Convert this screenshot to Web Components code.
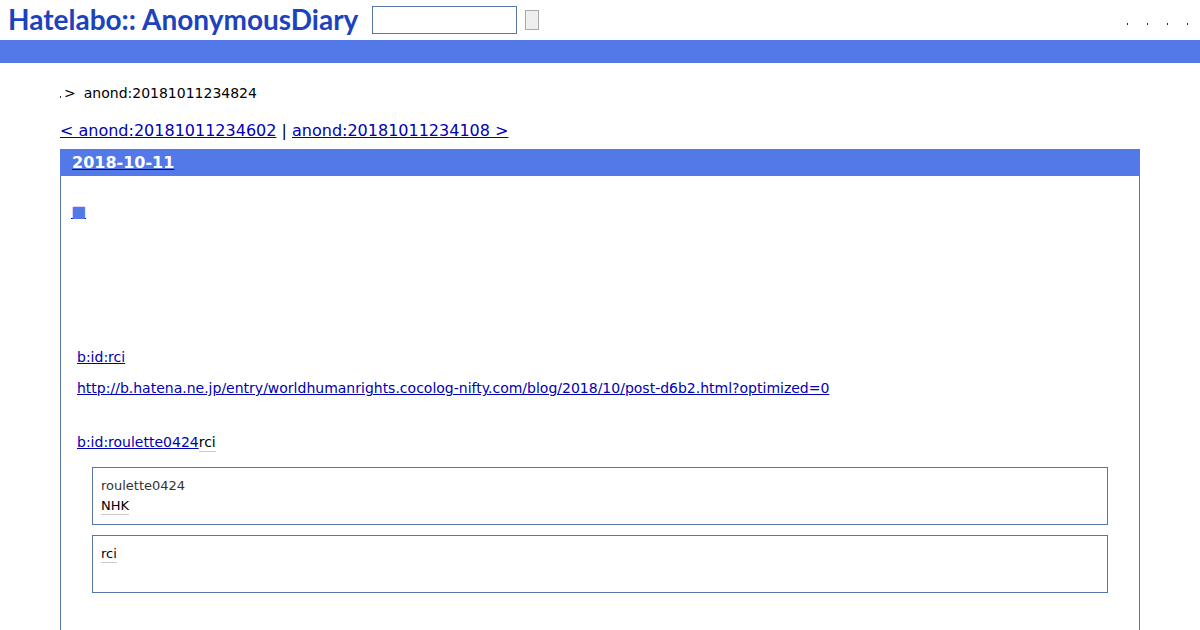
<!DOCTYPE html>
<html lang="ja">
<head>
<meta charset="utf-8">
<title>anond:20181011234824</title>
<style>
html, body { margin: 0; }
body { background: #fff; color: #000; font: 14px/20px "DejaVu Sans", "Noto Sans CJK JP", sans-serif; }
</style>
</head>
<body>
<diary-page>
  <site-header slot="header"></site-header>
  <bread-crumb>anond:20181011234824</bread-crumb>
  <diary-pager prev="anond:20181011234602" next="anond:20181011234108"></diary-pager>
  <diary-day date="2018-10-11">
    <diary-entry>
      <entry-line class="first"><text-link>b:id:rci</text-link></entry-line>
      <entry-line><text-link>http://b.hatena.ne.jp/entry/worldhumanrights.cocolog-nifty.com/blog/2018/10/post-d6b2.html?optimized=0</text-link></entry-line>
      <entry-line class="spaced"><text-link>b:id:roulette0424</text-link><key-word>rci</key-word></entry-line>
      <quote-box><div>roulette0424</div><key-word>NHK</key-word></quote-box>
      <quote-box><key-word>rci</key-word></quote-box>
    </diary-entry>
  </diary-day>
</diary-page>
<script>
function define(name, render) {
  customElements.define(name, class extends HTMLElement {
    constructor() {
      super();
      this.attachShadow({ mode: "open" }).innerHTML = render(this).trim();
    }
  });
}

define("diary-page", () => `
  <style>
    :host { display: flex; flex-direction: column; min-height: 100vh; }
    main { flex: 1; display: flex; flex-direction: column; padding: 20px 60px 0; }
  </style>
  <slot name="header"></slot>
  <main><slot></slot></main>`);

define("site-header", () => `
  <style>
    :host { display: block; border-bottom: 23px solid #5279e7; }
    header { display: flex; align-items: center; height: 40px; padding: 0 12px 0 8px; }
    .logo { display: flex; gap: 6px; width: 364px; padding-bottom: 2px; font: 700 28px/32px Lato, sans-serif; color: #1c43bd; text-decoration: none; }
    form { display: flex; align-items: center; gap: 8px; }
    input { box-sizing: border-box; width: 145px; height: 28px; margin: 0; padding: 2px 4px; border: 1px solid #5577aa; background: #fff; font: inherit; }
    button { box-sizing: border-box; width: 14px; height: 20px; padding: 0; border: 1px solid #a9a9a9; background: #efefef; }
    nav { display: flex; gap: 19px; margin: 8px 0 0 auto; }
    nav a { width: 1px; height: 2px; background: #333; }
  </style>
  <header>
    <a class="logo" href="#"><span>Hatelabo::</span><span>AnonymousDiary</span></a>
    <form><input type="text" aria-label="Search"><button type="button" aria-label="Submit search"></button></form>
    <nav aria-label="Account"><a href="#" aria-label="User"></a><a href="#" aria-label="Diary"></a><a href="#" aria-label="Login"></a><a href="#" aria-label="Help"></a></nav>
  </header>`);

define("bread-crumb", () => `
  <style>
    :host { display: flex; align-items: center; }
    a { width: 1px; height: 2px; margin: 8px 3px 0 0; background: #333; }
    .sep { margin-right: 8px; }
  </style>
  <a href="#" aria-label="Home"></a><span class="sep">&gt;</span><span><slot></slot></span>`);

define("diary-pager", el => `
  <style>
    :host { display: block; margin: 18px 0 8px; font-size: 16px; }
    a { color: #0000b4; }
  </style>
  <a href="#">&lt; ${el.getAttribute("prev")}</a> | <a href="#">${el.getAttribute("next")} &gt;</a>`);

define("diary-day", el => `
  <style>
    :host { flex: 1; display: block; border: 1px solid #5577aa; border-width: 0 1px; }
    h2 { margin: 0 -1px; padding: 4px 12px 3px; background: #5279e7; font-size: 16px; line-height: 20px; }
    a { color: #fff; text-decoration-color: #0000b4; }
  </style>
  <h2><a href="#">${el.getAttribute("date")}</a></h2>
  <slot></slot>`);

define("diary-entry", () => `
  <style>
    :host { display: block; padding: 26px 31px 37px 16px; }
    h3 { margin: 0 0 0 -6px; font-size: 16px; line-height: 20px; }
    a { color: #5279e7; text-decoration-color: #0000b4; }
  </style>
  <h3><a href="#">■</a></h3>
  <slot></slot>`);

define("entry-line", () => `
  <style>
    :host { display: block; margin-top: 11px; }
    :host(.first) { margin-top: 125px; }
    :host(.spaced) { margin-top: 34px; }
  </style>
  <slot></slot>`);

define("text-link", () => `<style>a { color: #0000b4; }</style><a href="#"><slot></slot></a>`);

define("key-word", () => `<style>a { color: #000; text-decoration: none; border-bottom: 1px solid #ccc; padding-bottom: 1px; }</style><a href="#"><slot></slot></a>`);

define("quote-box", () => `
  <style>
    :host { display: block; margin: 10px 0 0 15px; font-size: 13px; color: #333; }
    :host(:first-of-type) { margin-top: 15px; }
    blockquote { box-sizing: border-box; min-height: 58px; margin: 0; padding: 8px; border: 1px solid #5577aa; }
  </style>
  <blockquote><slot></slot></blockquote>`);
</script>
</body>
</html>
